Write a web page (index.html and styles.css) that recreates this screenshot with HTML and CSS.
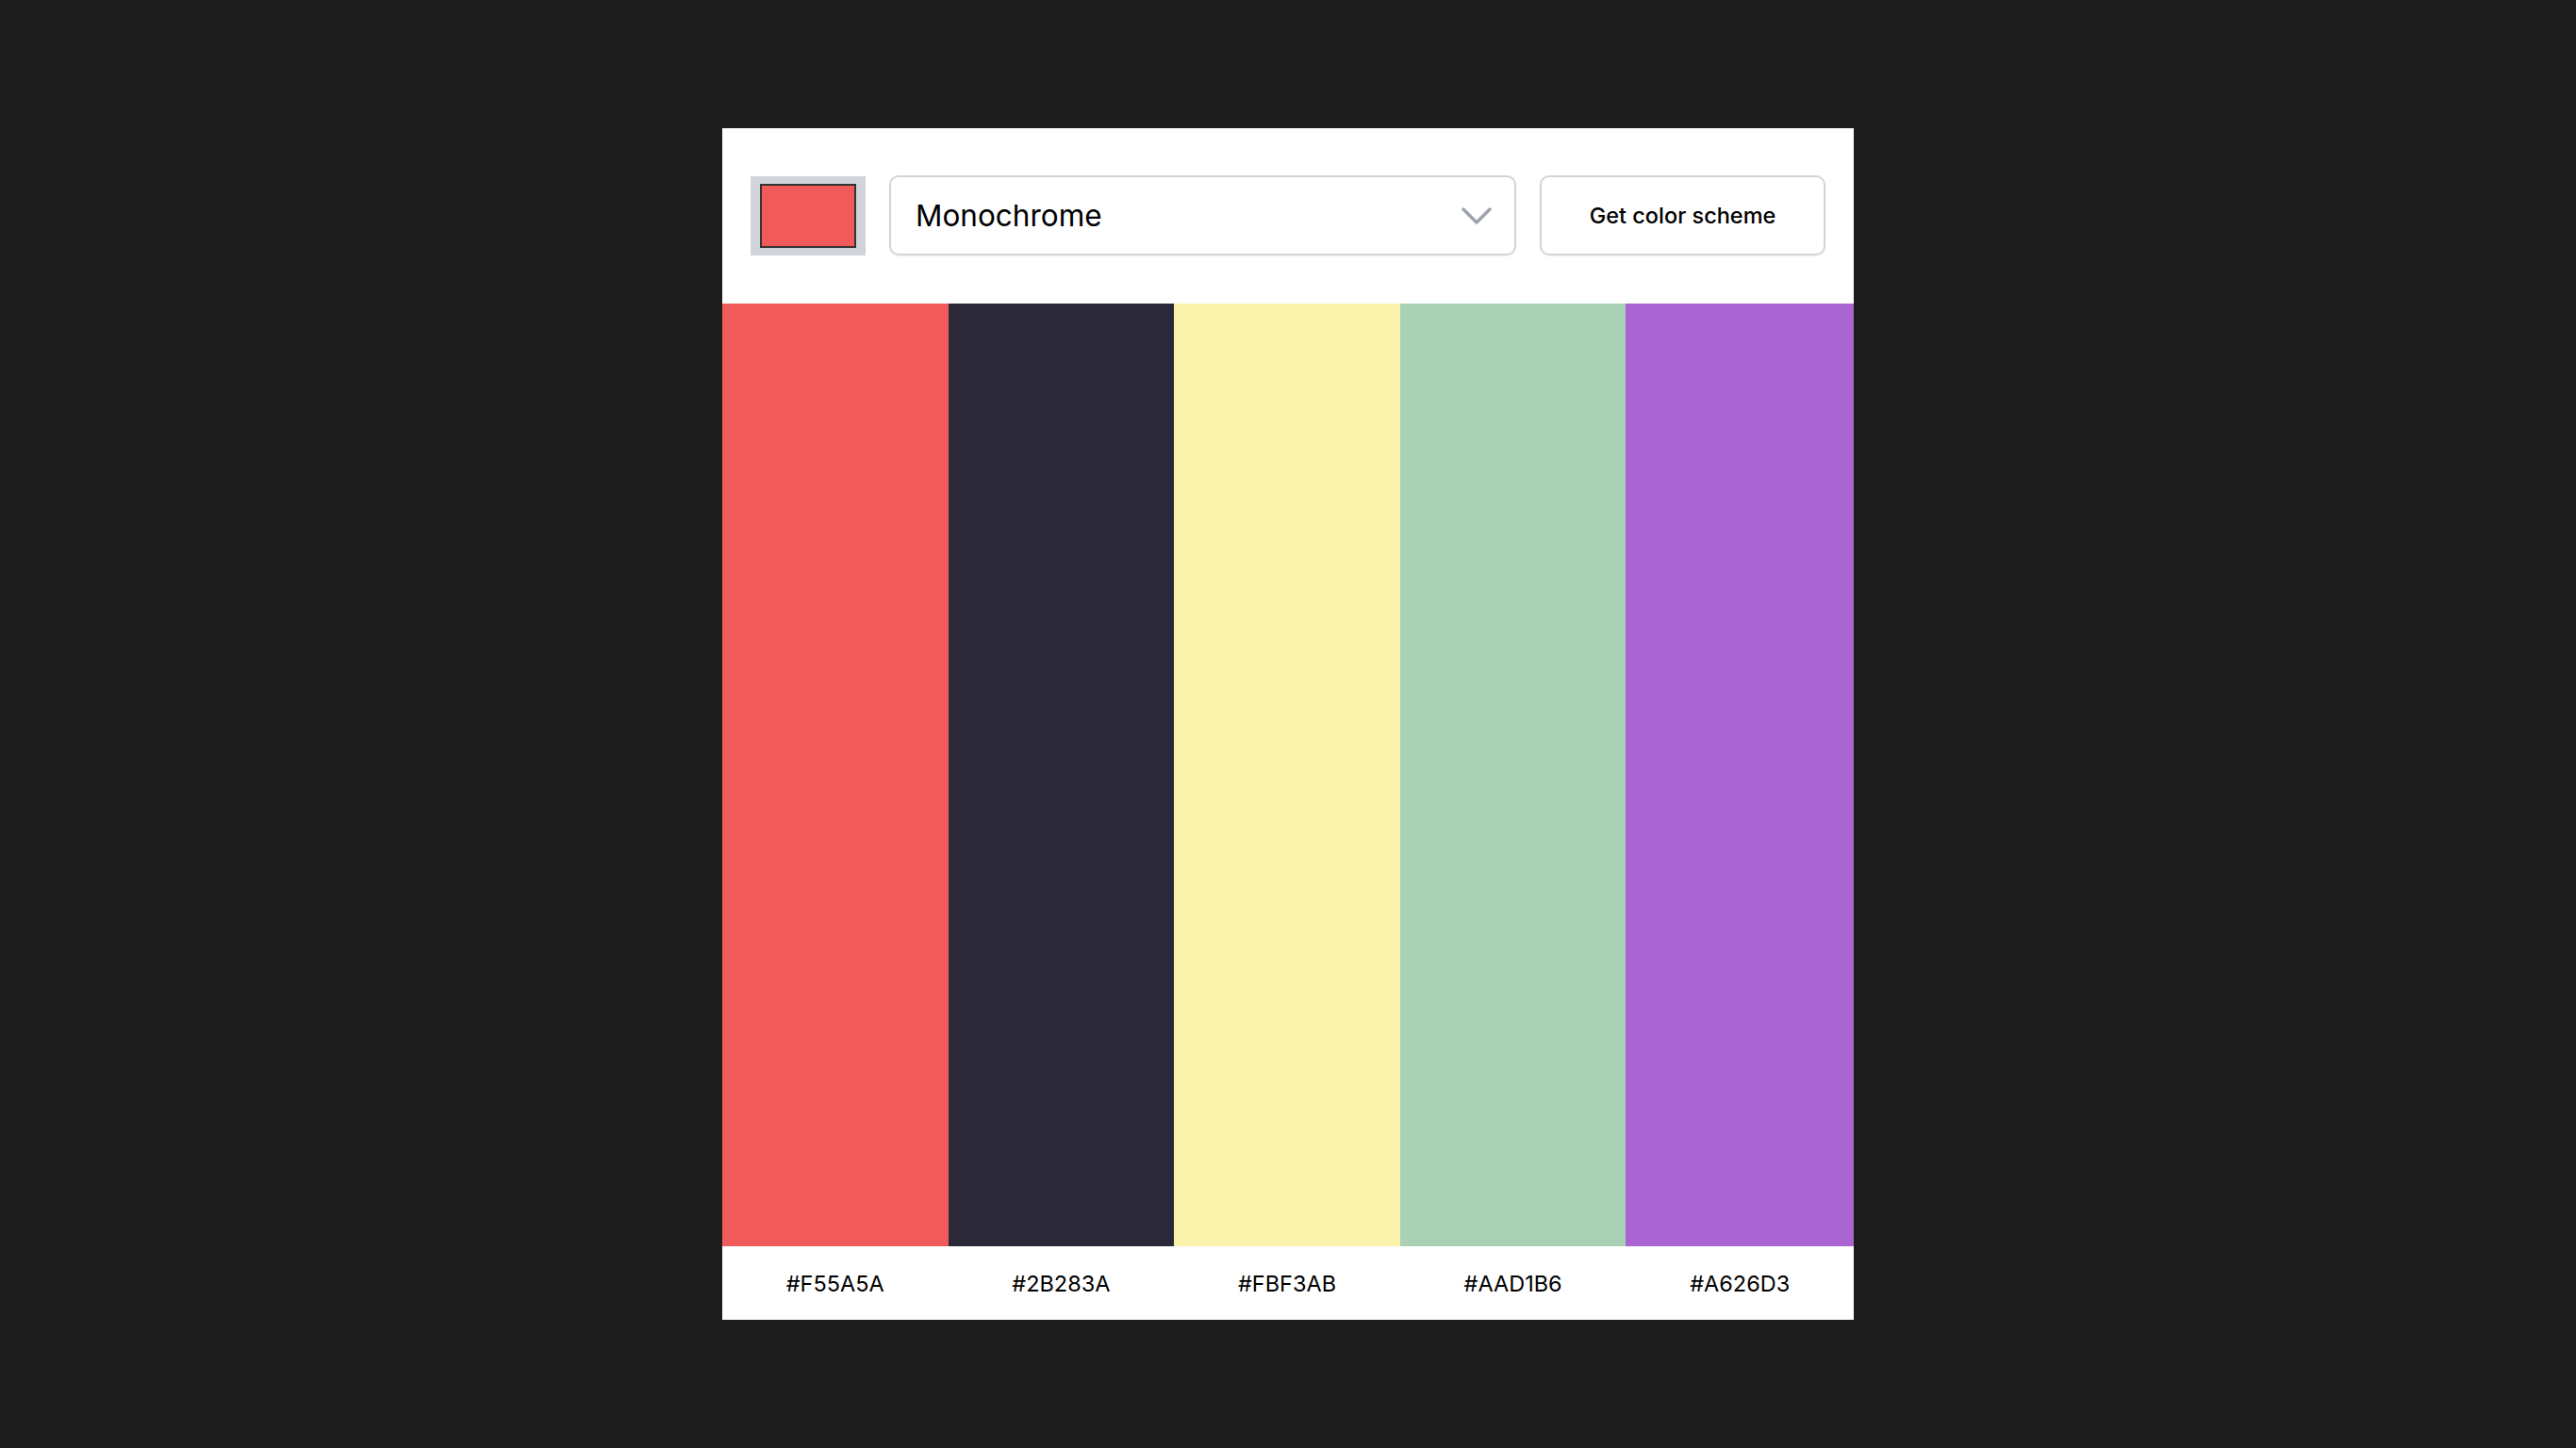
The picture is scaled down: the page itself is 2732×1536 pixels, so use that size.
FILE: index.html
```html
<!DOCTYPE html>
<html lang="en">
<head>
<meta charset="utf-8">
<title>Color Scheme</title>
<link rel="stylesheet" href="styles.css">
</head>
<body>
<main class="card">
  <header class="controls">
    <div class="color-input"><div class="color-swatch"></div></div>
    <div class="select">
      <span class="select-value">Monochrome</span>
      <svg class="chevron" width="32" height="18" viewBox="0 0 32 18" aria-hidden="true">
        <path d="M2 2 L16 16 L30 2" fill="none" stroke="#9ca3af" stroke-width="3.5" stroke-linecap="round" stroke-linejoin="round"/>
      </svg>
    </div>
    <button class="btn">Get color scheme</button>
  </header>
  <section class="palette">
    <div class="col"><div class="strip" style="background:#F05A5B"></div><div class="hex">#F55A5A</div></div>
    <div class="col"><div class="strip" style="background:#2B283A"></div><div class="hex">#2B283A</div></div>
    <div class="col"><div class="strip" style="background:#FBF3AB"></div><div class="hex">#FBF3AB</div></div>
    <div class="col"><div class="strip" style="background:#AAD1B6"></div><div class="hex">#AAD1B6</div></div>
    <div class="col"><div class="strip" style="background:#AA65D2"></div><div class="hex">#A626D3</div></div>
  </section>
</main>
</body>
</html>
```
FILE: styles.css
```css
* { box-sizing: border-box; }
html, body { margin: 0; padding: 0; }
body {
  background: #1c1c1c;
  min-height: 100vh;
  display: flex;
  align-items: center;
  justify-content: center;
  font-family: Inter, "Noto Sans", sans-serif;
  color: #000;
}
.card {
  width: 1200px;
  background: #fff;
  display: flex;
  flex-direction: column;
}
.controls {
  display: flex;
  align-items: center;
  gap: 25px;
  padding: 50px 30px 51px 30px;
}
.color-input {
  width: 122px;
  height: 84px;
  background: #d1d5db;
  padding: 8px 10px;
  flex: none;
}
.color-swatch {
  width: 100%;
  height: 100%;
  background: #F05A5B;
  border: 2px solid #333;
}
.select {
  flex: 1;
  height: 85px;
  border: 2px solid #d1d5db;
  border-radius: 10px;
  box-shadow: 0 1px 2px rgba(0,0,0,0.06);
  display: flex;
  align-items: center;
  justify-content: space-between;
  padding: 0 24px 0 26px;
}
.select-value {
  font-size: 31.5px;
  font-weight: 400;
}
.chevron { display: block; }
.btn {
  width: 303px;
  height: 85px;
  flex: none;
  background: #fff;
  border: 2px solid #d1d5db;
  border-radius: 10px;
  box-shadow: 0 1px 2px rgba(0,0,0,0.06);
  font-family: Inter, "Noto Sans", sans-serif;
  font-size: 23.5px;
  font-weight: 500;
  color: #000;
  padding: 0;
}
.palette {
  display: flex;
}
.col {
  flex: 1 1 auto;
  display: flex;
  flex-direction: column;
}
.strip { height: 1000px; }
.hex {
  height: 78px;
  display: flex;
  align-items: center;
  justify-content: center;
  font-size: 23.5px;
  font-weight: 400;
  padding-top: 1px;
}
```
